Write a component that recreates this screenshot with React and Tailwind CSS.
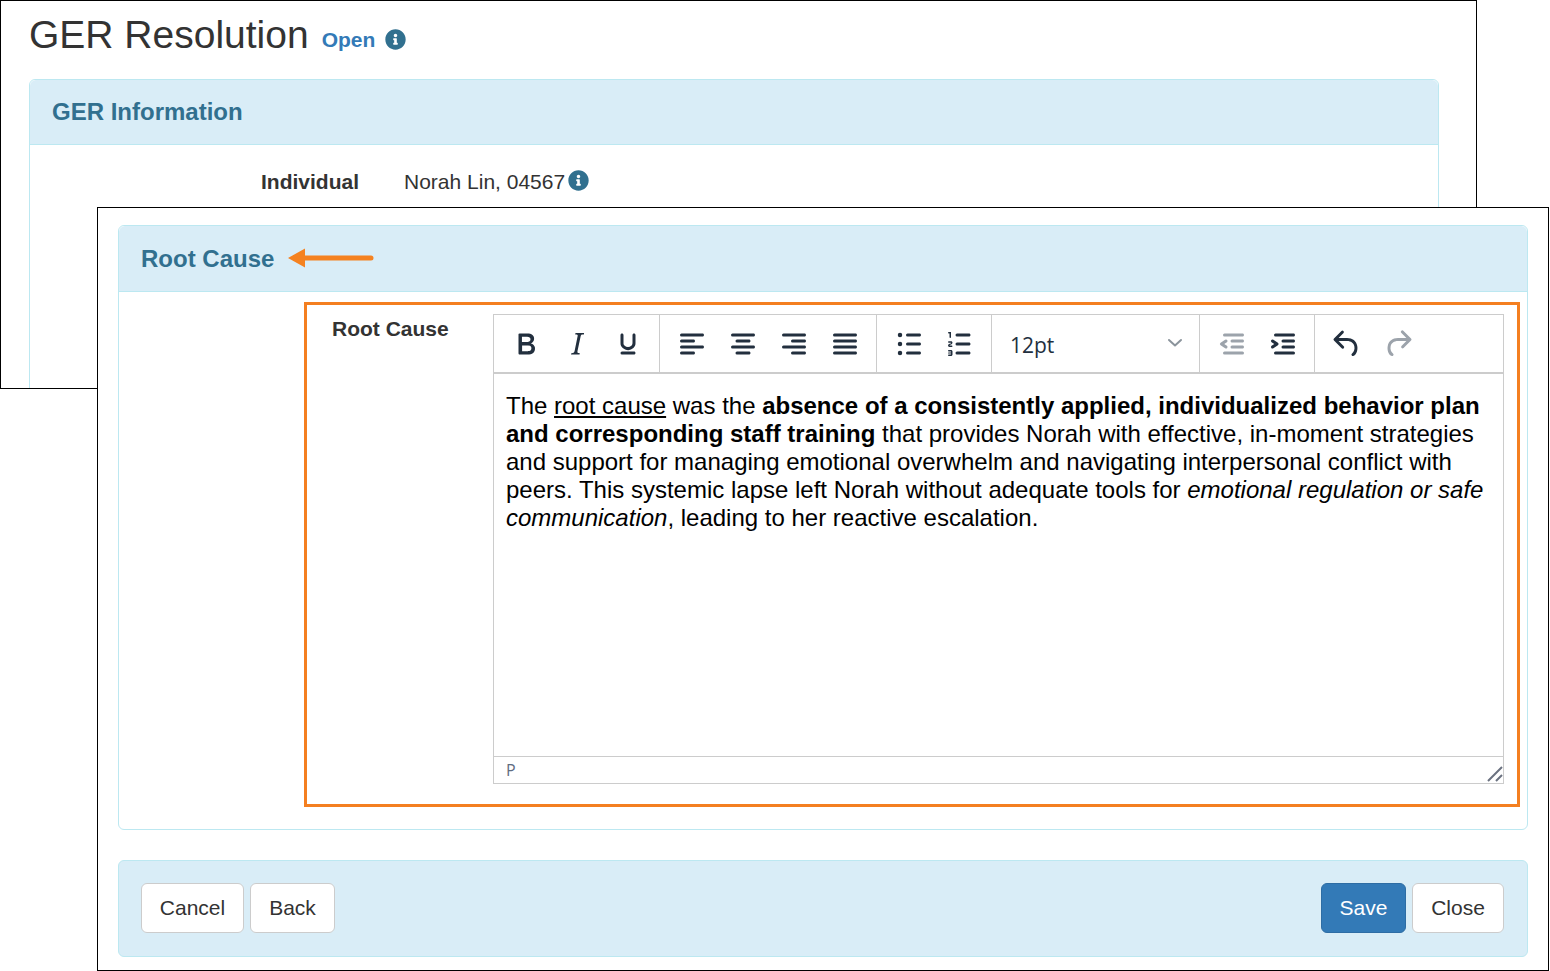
import React from 'react';
import { FaInfoCircle } from 'react-icons/fa';

const sans = "font-['Liberation_Sans',Arial,sans-serif]";
const editorUi = "font-['Open_Sans','Noto_Sans',sans-serif]";

const iconPaths = {
  bold: 'M7.8 19c-.3 0-.5 0-.6-.2l-.2-.5V5.7c0-.2 0-.4.2-.5l.6-.2h5c1.5 0 2.7.3 3.5 1 .7.6 1.1 1.4 1.1 2.5a3 3 0 0 1-.6 1.9c-.4.6-1 1-1.6 1.2.4.1.9.3 1.3.6s.8.7 1 1.2c.4.4.5 1 .5 1.6 0 1.3-.4 2.3-1.3 3-.8.7-2.1 1-3.8 1H7.8zm5-8.3c.6 0 1.2-.1 1.6-.5.4-.3.6-.7.6-1.3 0-1.1-.8-1.7-2.3-1.7H9.3v3.5h3.4zm.5 6c.7 0 1.3-.1 1.7-.4.4-.4.6-.9.6-1.5s-.2-1-.7-1.4c-.4-.3-1-.4-2-.4H9.4v3.8h4z',
  italic: 'M16.7 4.7l-.1.9h-.3c-.6 0-1 0-1.4.3-.3.3-.4.6-.5 1.1l-2.1 9.8v.6c0 .5.4.8 1.4.8h.2l-.2.8H8l.2-.8h.2c1.1 0 1.8-.5 2-1.5l2-9.8.1-.5c0-.6-.4-.8-1.4-.8h-.3l.2-.9h5.8z',
  underline: 'M16 5c.6 0 1 .4 1 1v5.5a4 4 0 0 1-.4 1.8l-1 1.4a5.3 5.3 0 0 1-5.5 1 5 5 0 0 1-1.6-1c-.5-.4-.8-.9-1.1-1.4a4 4 0 0 1-.4-1.8V6c0-.6.4-1 1-1s1 .4 1 1v5.5c0 .3 0 .6.2 1l.6.7a3.3 3.3 0 0 0 2.2.8 3.4 3.4 0 0 0 2.2-.8c.3-.2.4-.5.6-.8l.2-.9V6c0-.6.4-1 1-1zM8 17h8c.6 0 1 .4 1 1s-.4 1-1 1H8a1 1 0 0 1 0-2z',
  alignLeft: 'M5 5h14c.6 0 1 .4 1 1s-.4 1-1 1H5a1 1 0 1 1 0-2zm0 4h8c.6 0 1 .4 1 1s-.4 1-1 1H5a1 1 0 1 1 0-2zm0 8h8c.6 0 1 .4 1 1s-.4 1-1 1H5a1 1 0 0 1 0-2zm0-4h14c.6 0 1 .4 1 1s-.4 1-1 1H5a1 1 0 0 1 0-2z',
  alignCenter: 'M5 5h14c.6 0 1 .4 1 1s-.4 1-1 1H5a1 1 0 1 1 0-2zm3 4h8c.6 0 1 .4 1 1s-.4 1-1 1H8a1 1 0 1 1 0-2zm0 8h8c.6 0 1 .4 1 1s-.4 1-1 1H8a1 1 0 0 1 0-2zm-3-4h14c.6 0 1 .4 1 1s-.4 1-1 1H5a1 1 0 0 1 0-2z',
  alignRight: 'M5 5h14c.6 0 1 .4 1 1s-.4 1-1 1H5a1 1 0 1 1 0-2zm6 4h8c.6 0 1 .4 1 1s-.4 1-1 1h-8a1 1 0 0 1 0-2zm0 8h8c.6 0 1 .4 1 1s-.4 1-1 1h-8a1 1 0 0 1 0-2zm-6-4h14c.6 0 1 .4 1 1s-.4 1-1 1H5a1 1 0 0 1 0-2z',
  justify: 'M5 5h14c.6 0 1 .4 1 1s-.4 1-1 1H5a1 1 0 1 1 0-2zm0 4h14c.6 0 1 .4 1 1s-.4 1-1 1H5a1 1 0 1 1 0-2zm0 4h14c.6 0 1 .4 1 1s-.4 1-1 1H5a1 1 0 0 1 0-2zm0 4h14c.6 0 1 .4 1 1s-.4 1-1 1H5a1 1 0 0 1 0-2z',
  bullets: 'M11 5h8c.6 0 1 .4 1 1s-.4 1-1 1h-8a1 1 0 0 1 0-2zm0 6h8c.6 0 1 .4 1 1s-.4 1-1 1h-8a1 1 0 0 1 0-2zm0 6h8c.6 0 1 .4 1 1s-.4 1-1 1h-8a1 1 0 0 1 0-2zM4.5 6a1.5 1.5 0 1 1 3 0 1.5 1.5 0 0 1-3 0zm0 6a1.5 1.5 0 1 1 3 0 1.5 1.5 0 0 1-3 0zm0 6a1.5 1.5 0 1 1 3 0 1.5 1.5 0 0 1-3 0z',
  numbers: 'M10 17h8c.6 0 1 .4 1 1s-.4 1-1 1h-8a1 1 0 0 1 0-2zm0-6h8c.6 0 1 .4 1 1s-.4 1-1 1h-8a1 1 0 0 1 0-2zm0-6h8c.6 0 1 .4 1 1s-.4 1-1 1h-8a1 1 0 1 1 0-2zM6 4v3.5c0 .3-.2.5-.5.5a.5.5 0 0 1-.5-.5V5h-.5a.5.5 0 0 1 0-1H6zm-1 8.8l.2.2h1.3c.3 0 .5.2.5.5s-.2.5-.5.5H4.9a1 1 0 0 1-.9-1V13c0-.4.3-.8.6-1l1.2-.4.2-.3a.2.2 0 0 0-.2-.2H4.5a.5.5 0 0 1-.5-.5c0-.3.2-.5.5-.5h1.6c.5 0 .9.4.9 1v.1c0 .4-.3.8-.6 1l-1.2.4-.2.3zM7 17v2c0 .6-.4 1-1 1H4.5a.5.5 0 0 1 0-1h1.2c.2 0 .3-.1.3-.3 0-.2-.1-.3-.3-.3H4.4a.4.4 0 1 1 0-.8h1.3c.2 0 .3-.1.3-.3 0-.2-.1-.3-.3-.3H4.5a.5.5 0 1 1 0-1H6c.6 0 1 .4 1 1z',
  outdent: 'M7 5h12c.6 0 1 .4 1 1s-.4 1-1 1H7a1 1 0 1 1 0-2zm5 4h7c.6 0 1 .4 1 1s-.4 1-1 1h-7a1 1 0 0 1 0-2zm0 4h7c.6 0 1 .4 1 1s-.4 1-1 1h-7a1 1 0 0 1 0-2zm-5 4h12a1 1 0 0 1 0 2H7a1 1 0 0 1 0-2zm1.6-3.8a1 1 0 0 1-1.2 1.6l-3-2a1 1 0 0 1 0-1.6l3-2a1 1 0 0 1 1.2 1.6L6.8 12l1.8 1.2z',
  indent: 'M7 5h12c.6 0 1 .4 1 1s-.4 1-1 1H7a1 1 0 1 1 0-2zm5 4h7c.6 0 1 .4 1 1s-.4 1-1 1h-7a1 1 0 0 1 0-2zm0 4h7c.6 0 1 .4 1 1s-.4 1-1 1h-7a1 1 0 0 1 0-2zm-5 4h12a1 1 0 0 1 0 2H7a1 1 0 0 1 0-2zm-2.6-3.8L6.2 12l-1.8-1.2a1 1 0 0 1 1.2-1.6l3 2a1 1 0 0 1 0 1.6l-3 2a1 1 0 1 1-1.2-1.6z',
  undo: 'M6.4 8H12c3.7 0 6.2 2 6.8 5.1.6 2.7-.4 5.6-2.3 6.8a1 1 0 0 1-1-1.8c1.1-.7 1.8-2.7 1.4-4.6-.5-2.1-2.1-3.5-4.9-3.5H6.4l3.3 3.3a1 1 0 1 1-1.4 1.4l-5-5a1 1 0 0 1 0-1.4l5-5a1 1 0 0 1 1.4 1.4L6.4 8z',
  redo: 'M17.6 10H12c-2.8 0-4.4 1.4-4.9 3.5-.4 2 .3 3.9 1.4 4.6a1 1 0 1 1-1 1.8c-2-1.2-2.9-4.1-2.3-6.8.6-3 3-5.1 6.8-5.1h5.6l-3.3-3.3a1 1 0 1 1 1.4-1.4l5 5a1 1 0 0 1 0 1.4l-5 5a1 1 0 0 1-1.4-1.4l3.3-3.3z',
};

const ToolIcon = ({ name, disabled }) => (
  <span className="flex h-[36px] w-[51px] items-center justify-center">
    <svg width="36" height="36" viewBox="0 0 24 24" fill={disabled ? '#9ca3ab' : '#222f3e'}>
      <path d={iconPaths[name]} />
    </svg>
  </span>
);

const ToolGroup = ({ children }) => (
  <div className="flex items-center border-r border-[#ccc] px-[6px]">{children}</div>
);

const Panel = ({ title, children, arrow, headerClass, className = '' }) => (
  <div className={`rounded-md border border-[#bce8f1] bg-white ${className}`}>
    <div className={`flex items-center rounded-t-md border-b border-[#bce8f1] bg-[#d9edf7] pl-[22px] ${headerClass}`}>
      <h3 className="text-[24px] font-bold text-[#31708f]">{title}</h3>
      {arrow}
    </div>
    {children}
  </div>
);

const Btn = ({ children, primary, className = '' }) => (
  <button
    className={`h-[50px] rounded-md border text-[21px] ${
      primary ? 'border-[#2e6da4] bg-[#337ab7] text-white' : 'border-[#ccc] bg-white text-[#333]'
    } ${className}`}
  >
    {children}
  </button>
);

const Editor = () => (
  <div className="flex h-[470px] w-[1011px] flex-col border border-[#ccc] bg-white">
    <div className="flex h-[59px] shrink-0 border-b-2 border-[#ccc]">
      <ToolGroup>
        <ToolIcon name="bold" />
        <ToolIcon name="italic" />
        <ToolIcon name="underline" />
      </ToolGroup>
      <ToolGroup>
        <ToolIcon name="alignLeft" />
        <ToolIcon name="alignCenter" />
        <ToolIcon name="alignRight" />
        <ToolIcon name="justify" />
      </ToolGroup>
      <ToolGroup>
        <ToolIcon name="bullets" />
        <ToolIcon name="numbers" />
      </ToolGroup>
      <div className={`flex w-[208px] items-center justify-between border-r border-[#ccc] pl-[18px] pr-[15px] text-[21px] text-[#222f3e] ${editorUi}`}>
        <span className="mt-[5px]">12pt</span>
        <svg width="18" height="10" viewBox="0 0 18 10" fill="none" stroke="#8b949c" strokeWidth="2" strokeLinecap="round" strokeLinejoin="round" className="mb-[2px]">
          <path d="M3 2l6 5.5L15 2" />
        </svg>
      </div>
      <ToolGroup>
        <ToolIcon name="outdent" disabled />
        <ToolIcon name="indent" />
      </ToolGroup>
      <div className="flex items-center pl-[6px]">
        <ToolIcon name="undo" />
        <ToolIcon name="redo" disabled />
      </div>
    </div>
    <div className="flex-1 pl-[12px] pr-[16px] pt-[18px] text-[24px] leading-[28px] text-black">
      <p>
        The <u>root cause</u> was the <b>absence of a consistently applied, individualized behavior plan and corresponding staff training</b> that provides Norah with effective, in-moment strategies and support for managing emotional overwhelm and navigating interpersonal conflict with peers. This systemic lapse left Norah without adequate tools for <i>emotional regulation or safe communication</i>, leading to her reactive escalation.
      </p>
    </div>
    <div className={`flex h-[27px] shrink-0 items-center justify-between border-t border-[#ccc] pl-[12px] text-[16px] text-[#5f6b80] ${editorUi}`}>
      <span>P</span>
      <svg width="16" height="16" viewBox="0 0 16 16" stroke="#6b7280" strokeWidth="2" className="mt-[8px]">
        <path d="M1 15L15 1M9 15l6-6" />
      </svg>
    </div>
  </div>
);

export default function App() {
  return (
    <div className={`relative h-[971px] w-[1550px] overflow-hidden bg-white text-[#333] ${sans}`}>
      {/* back window */}
      <div className="absolute left-0 top-0 h-[389px] w-[1477px] overflow-hidden border border-black bg-white pl-[28px] pr-[37px] pt-[10px]">
        <div className="mb-[20px] flex h-[48px] items-center">
          <h1 className="text-[39px] leading-[48px]">GER Resolution</h1>
          <span className="ml-[13px] mt-[10px] text-[21px] font-bold text-[#337ab7]">Open</span>
          <FaInfoCircle className="ml-[10px] mt-[8px] text-[21px] text-[#31708f]" />
        </div>
        <Panel title="GER Information" headerClass="h-[65px]" className="h-[400px]">
          <div className="flex items-center pl-[231px] pt-[22px] text-[21px] leading-[30px]">
            <b className="w-[143px]">Individual</b>
            <span>Norah Lin, 04567</span>
            <FaInfoCircle className="mb-[3px] ml-[3px] text-[21px] text-[#31708f]" />
          </div>
        </Panel>
      </div>

      {/* front window */}
      <div className="absolute left-[97px] top-[207px] flex h-[764px] w-[1452px] flex-col border border-black bg-white px-[20px] pt-[17px]">
        <Panel
          title="Root Cause"
          headerClass="h-[66px]"
          className="h-[605px]"
          arrow={
            <svg width="86" height="24" viewBox="0 0 86 24" className="mb-[1px] ml-[14px]">
              <path d="M0 12l17-9.5V9.5h66a2.5 2.5 0 0 1 0 5H17v7z" fill="#f58220" />
            </svg>
          }
        >
          <div className="ml-[185px] mr-[7px] mt-[10px] flex h-[505px] border-[3px] border-[#f47f20] pl-[25px] pt-[9px]">
            <b className="w-[161px] text-[21px] leading-[30px]">Root Cause</b>
            <Editor />
          </div>
        </Panel>
        <div className="mt-[30px] flex h-[97px] items-center justify-between rounded-md border border-[#bce8f1] bg-[#d9edf7] pl-[22px] pr-[23px]">
          <div className="mb-[1px] flex gap-[6px]">
            <Btn className="w-[103px]">Cancel</Btn>
            <Btn className="w-[85px]">Back</Btn>
          </div>
          <div className="mb-[1px] flex gap-[6px]">
            <Btn primary className="w-[85px]">Save</Btn>
            <Btn className="w-[92px]">Close</Btn>
          </div>
        </div>
      </div>
    </div>
  );
}
